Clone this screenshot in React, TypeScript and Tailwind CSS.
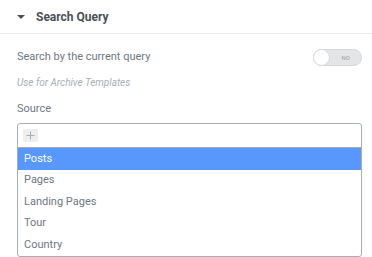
export default function App() {
  const options = ["Posts", "Pages", "Landing Pages", "Tour", "Country"];

  return (
    <div className="w-[372px] h-[257px] bg-white overflow-hidden font-['Roboto',sans-serif]">
      {/* Section header */}
      <div className="h-[34px] border-b border-[#e6e8ea] flex items-center pl-[17px]">
        <svg width="8" height="4" viewBox="0 0 8 4" className="mr-[11px]">
          <path d="M0 0 L8 0 L4 4 Z" fill="#495157" />
        </svg>
        <span className="text-[12px] font-bold text-[#495157] leading-none">Search Query</span>
      </div>

      <div className="pl-[17px] pr-[10px]">
        {/* Switch row */}
        <div className="flex items-center justify-between mt-[15px] h-[17px]">
          <span className="text-[11px] text-[#6d7882]">Search by the current query</span>
          <div className="relative w-[49px] h-[17px] rounded-full bg-[#e3e5e7] border border-[#d5d8dc] flex items-center justify-end pr-[11px]">
            <div className="absolute left-[-1px] top-[-1px] w-[17px] h-[17px] rounded-full bg-white border border-[#d5d8dc]" />
            <span className="text-[6px] text-[#a4afb7] font-medium">NO</span>
          </div>
        </div>

        <p className="mt-[11px] text-[10px] italic text-[#a4afb7] leading-[12px]">Use for Archive Templates</p>

        <p className="mt-[13px] text-[11px] text-[#6d7882] leading-[13px]">Source</p>

        {/* Select2 */}
        <div className="mt-[8px] border border-[#a4afb7] rounded-[3px] h-[134px] overflow-hidden">
          <div className="h-[24px] border-b border-[#aaaaaa] flex items-center pl-[5px]">
            <div className="w-[15px] h-[13px] bg-[#eeeeee] flex items-center justify-center">
              <svg width="9" height="9" viewBox="0 0 9 9">
                <path d="M4.5 0.5 V8.5 M0.5 4.5 H8.5" stroke="#a4afb7" strokeWidth="1" />
              </svg>
            </div>
          </div>
          {options.map((o, i) => (
            <div
              key={o}
              className={
                i === 0
                  ? "h-[21.5px] flex items-center pl-[6px] text-[11px] bg-[#5897fb] text-white"
                  : "h-[21.5px] flex items-center pl-[6px] text-[11px] text-[#6d7882]"
              }
            >
              {o}
            </div>
          ))}
        </div>
      </div>
    </div>
  );
}
